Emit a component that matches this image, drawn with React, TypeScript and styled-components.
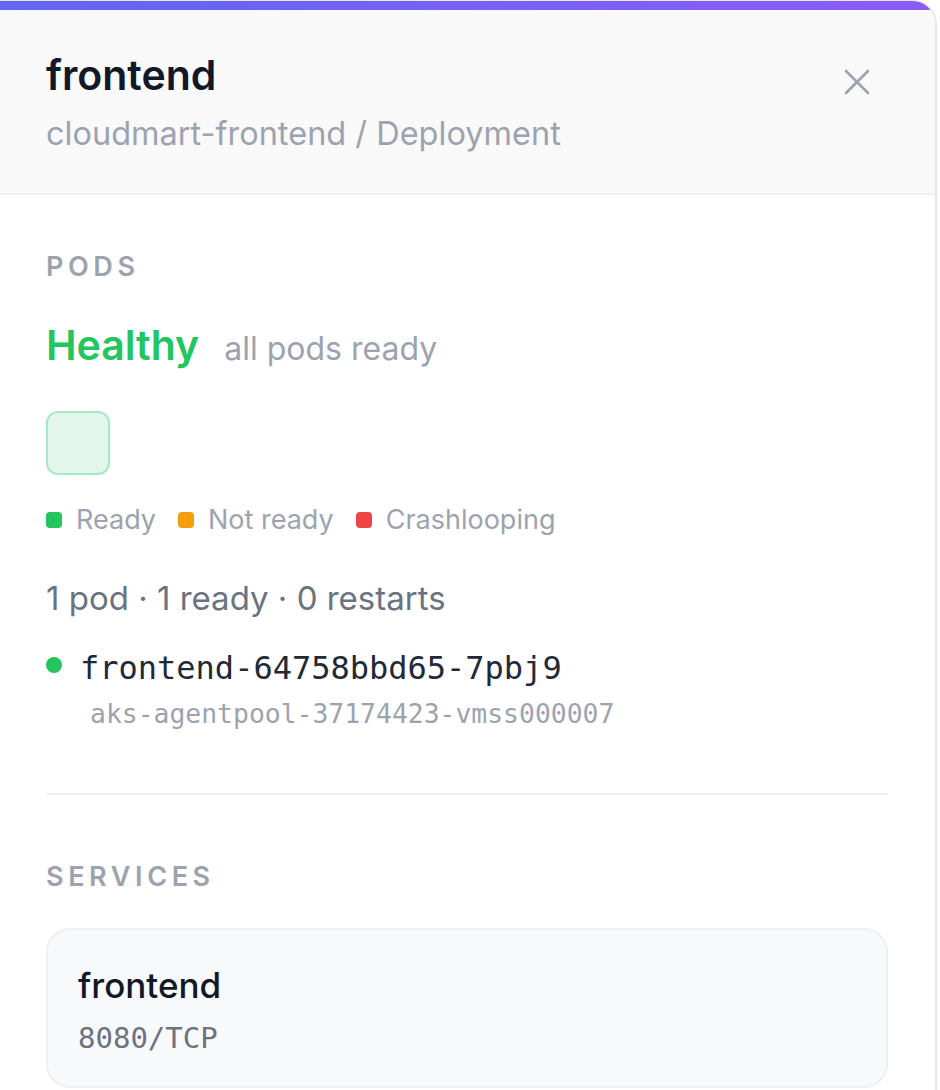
import React from 'react'
import styled, { createGlobalStyle } from 'styled-components'

const GlobalStyle = createGlobalStyle`
  html, body {
    margin: 0;
    padding: 0;
    background: #ffffff;
  }
  body {
    font-family: Inter, "Noto Sans", "Liberation Sans", sans-serif;
    -webkit-font-smoothing: antialiased;
  }
`

type Status = 'ready' | 'pending' | 'crash'

const statusColor: Record<Status, string> = {
  ready: '#22c55e',
  pending: '#f59e0b',
  crash: '#ef4444',
}

const legend: { status: Status; label: string }[] = [
  { status: 'ready', label: 'Ready' },
  { status: 'pending', label: 'Not ready' },
  { status: 'crash', label: 'Crashlooping' },
]

const pods = [
  { name: 'frontend-64758bbd65-7pbj9', node: 'aks-agentpool-37174423-vmss000007', status: 'ready' as Status },
]

const App = () => {
  return (
    <>
      <GlobalStyle />
      <Panel>
        <GradientBar />
        <Header>
          <TitleBlock>
            <Title>frontend</Title>
            <Subtitle>cloudmart-frontend / Deployment</Subtitle>
          </TitleBlock>
          <CloseButton aria-label="Close">
            <svg width="26" height="26" viewBox="0 0 26 26" fill="none">
              <path d="M2 2 24 24M24 2 2 24" stroke="#9ca3af" strokeWidth="2.6" strokeLinecap="round" />
            </svg>
          </CloseButton>
        </Header>

        <Body>
          <SectionLabel>Pods</SectionLabel>
          <HealthRow>
            <HealthText>Healthy</HealthText>
            <HealthNote>all pods ready</HealthNote>
          </HealthRow>

          <PodGrid>
            {pods.map((p) => (
              <PodCell key={p.name} status={p.status} />
            ))}
          </PodGrid>

          <Legend>
            {legend.map((l) => (
              <LegendItem key={l.label}>
                <LegendDot status={l.status} />
                {l.label}
              </LegendItem>
            ))}
          </Legend>

          <Summary>1 pod · 1 ready · 0 restarts</Summary>

          {pods.map((p) => (
            <PodRow key={p.name}>
              <PodLine>
                <PodDot status={p.status} />
                <PodName>{p.name}</PodName>
              </PodLine>
              <NodeName>{p.node}</NodeName>
            </PodRow>
          ))}

          <Divider />

          <SectionLabel>Services</SectionLabel>
          <ServiceCard>
            <ServiceName>frontend</ServiceName>
            <ServicePort>8080/TCP</ServicePort>
          </ServiceCard>
        </Body>
      </Panel>
    </>
  )
}

export default App

const Panel = styled.div`
  width: 937px;
  height: 1090px;
  box-sizing: border-box;
  border-top: 1px solid #e5e7eb;
  border-right: 2px solid #e5e7eb;
  border-top-right-radius: 24px;
  overflow: hidden;
  background: #ffffff;
  display: flex;
  flex-direction: column;
`

const GradientBar = styled.div`
  height: 9px;
  flex-shrink: 0;
  background: linear-gradient(90deg, #6366f1 0%, #8b5cf6 100%);
`

const Header = styled.div`
  display: flex;
  justify-content: space-between;
  align-items: flex-start;
  background: #f9f9fa;
  padding: 43px 65px 41px 46px;
  border-bottom: 2px solid #f0f1f3;
`

const TitleBlock = styled.div`
  display: flex;
  flex-direction: column;
  gap: 19px;
`

const Title = styled.div`
  font-size: 41px;
  line-height: 44px;
  font-weight: 600;
  color: #111827;
`

const Subtitle = styled.div`
  font-size: 32.5px;
  line-height: 36px;
  color: #9ca3af;
`

const CloseButton = styled.div`
  margin-top: 16px;
  width: 26px;
  height: 26px;
  cursor: pointer;
  display: flex;
`

const Body = styled.div`
  display: flex;
  flex-direction: column;
  padding: 57px 47px 0 46px;
`

const SectionLabel = styled.div`
  font-size: 27px;
  line-height: 30px;
  font-weight: 600;
  letter-spacing: 4.6px;
  text-transform: uppercase;
  color: #9ca3af;
`

const HealthRow = styled.div`
  display: flex;
  align-items: baseline;
  gap: 25px;
  margin-top: 39px;
`

const HealthText = styled.div`
  font-size: 41px;
  line-height: 48px;
  font-weight: 600;
  color: #22c55e;
`

const HealthNote = styled.div`
  font-size: 32px;
  color: #9ca3af;
`

const PodGrid = styled.div`
  display: flex;
  gap: 8px;
  margin-top: 42px;
`

const PodCell = styled.div<{ status: Status }>`
  width: 64px;
  height: 64px;
  box-sizing: border-box;
  border-radius: 12px;
  border: 2px solid #a7e9c2;
  background: #e3f6eb;
`

const Legend = styled.div`
  display: flex;
  gap: 22px;
  margin-top: 30px;
`

const LegendItem = styled.div`
  display: flex;
  align-items: center;
  gap: 14px;
  font-size: 27px;
  line-height: 30px;
  color: #9ca3af;
`

const LegendDot = styled.span<{ status: Status }>`
  width: 16px;
  height: 16px;
  border-radius: 4px;
  background: ${({ status }) => statusColor[status]};
`

const Summary = styled.div`
  margin-top: 45px;
  font-size: 33px;
  line-height: 36px;
  color: #6b7280;
`

const PodRow = styled.div`
  display: flex;
  flex-direction: column;
  margin-top: 33px;
`

const PodLine = styled.div`
  display: flex;
  align-items: center;
  gap: 18px;
`

const PodDot = styled.span<{ status: Status }>`
  width: 16px;
  height: 16px;
  border-radius: 50%;
  margin-top: -6px;
  background: ${({ status }) => statusColor[status]};
`

const PodName = styled.div`
  font-family: "DejaVu Sans Mono", "Liberation Mono", monospace;
  font-size: 32px;
  line-height: 38px;
  color: #1f2937;
`

const NodeName = styled.div`
  margin: 12px 0 0 44px;
  font-family: "DejaVu Sans Mono", "Liberation Mono", monospace;
  font-size: 26.4px;
  line-height: 30px;
  color: #9ca3af;
`

const Divider = styled.div`
  height: 2px;
  background: #f0f1f3;
  margin: 64px 0 67px;
`

const ServiceCard = styled.div`
  margin-top: 36px;
  border: 2px solid #eef0f2;
  border-radius: 24px;
  background: #f8f9fb;
  padding: 35px 30px 31px;
  display: flex;
  flex-direction: column;
  gap: 16px;
`

const ServiceName = styled.div`
  font-size: 35px;
  line-height: 40px;
  font-weight: 500;
  color: #111827;
`

const ServicePort = styled.div`
  font-family: "DejaVu Sans Mono", "Liberation Mono", monospace;
  font-size: 29px;
  line-height: 34px;
  color: #6b7280;
`
